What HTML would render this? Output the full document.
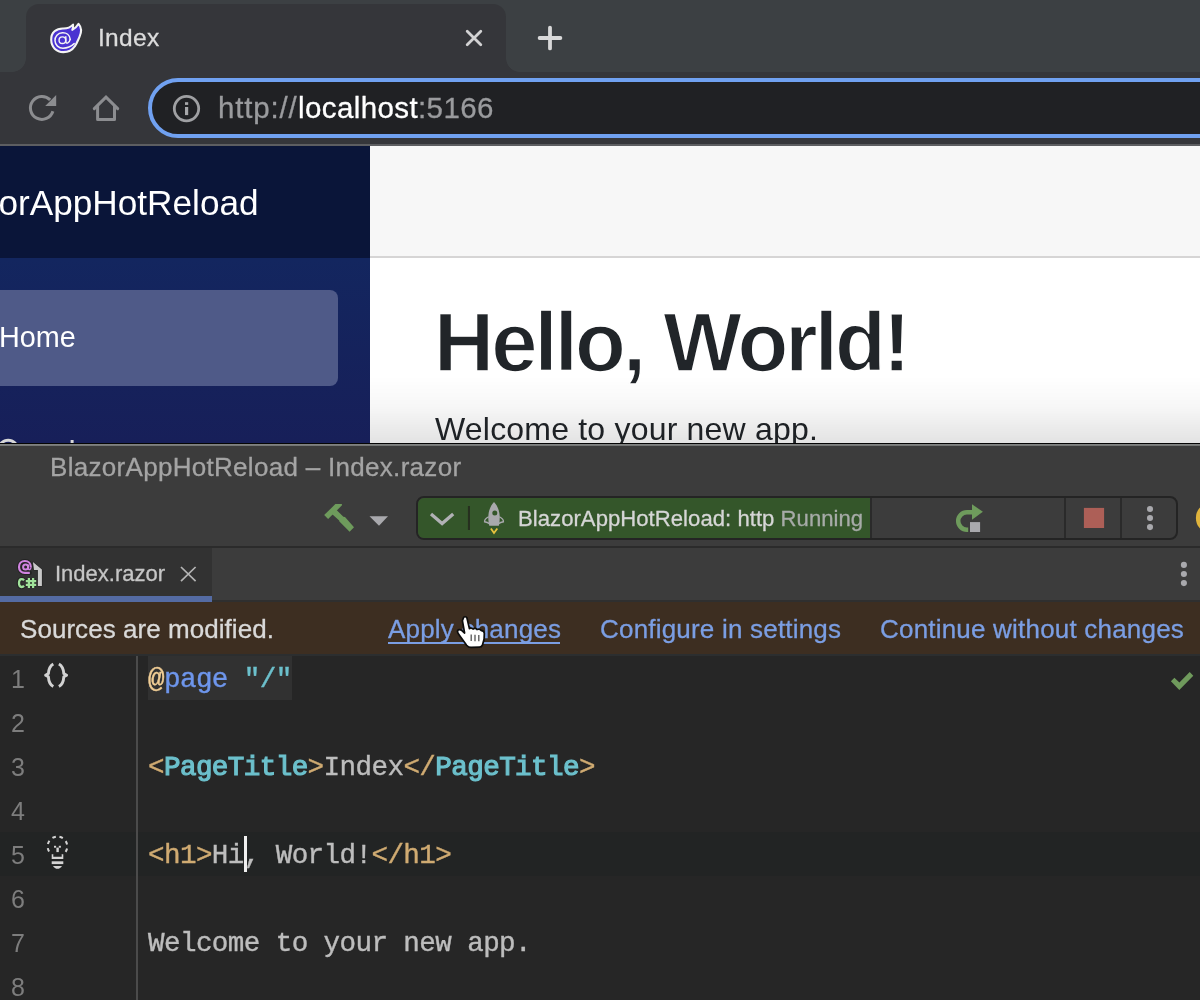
<!DOCTYPE html>
<html>
<head>
<meta charset="utf-8">
<title>Index</title>
<style>
*{box-sizing:border-box;margin:0;padding:0}
html,body{width:1200px;height:1000px;overflow:hidden;background:#3c4043}
body{font-family:"Liberation Sans",sans-serif;position:relative}
.abs{position:absolute}
.t{position:absolute;white-space:nowrap;line-height:1}
.t,.code,.ln{will-change:transform}
#idetitle,#runtxt,#ftname,#b1,#b2,#b3,#b4,#tabtitle,#u1,#u2,#u3{-webkit-text-stroke:.3px currentColor}
/* ---------- browser chrome ---------- */
#strip{left:0;top:0;width:1200px;height:72px;background:#3c4043}
#tab{left:26px;top:4px;width:480px;height:68px;background:#35363a;border-radius:13px 13px 0 0}
#flareL{left:12px;top:58px;width:14px;height:14px;background:radial-gradient(circle at 0 0,#3c4043 13.5px,#35363a 14.2px)}
#flareR{left:506px;top:58px;width:14px;height:14px;background:radial-gradient(circle at 14px 0,#3c4043 13.5px,#35363a 14.2px)}
#prevtab{left:-20px;top:4px;width:34px;height:68px;background:#3c4043}
#toolbar{left:0;top:72px;width:1200px;height:72px;background:#35363a}
#tbline{left:0;top:144px;width:1200px;height:2px;background:#5d5e61}
#url{left:148px;top:78px;width:1120px;height:60px;border:4px solid #70a1f1;border-radius:30px;background:#202124}
/* ---------- web page ---------- */
#page{left:0;top:146px;width:1200px;height:297px;background:#fff;overflow:hidden}
#side{left:0;top:0;width:370px;height:297px;background:linear-gradient(180deg,#13265f 0,#13265f 112px,#171f59 297px)}
#sidetop{left:0;top:0;width:370px;height:112px;background:#0a1539}
#maintop{left:370px;top:0;width:830px;height:112px;background:#f7f7f7;border-bottom:2px solid #d6d5d5}
#home{left:-10px;top:144px;width:348px;height:96px;border-radius:8px;background:#4f5a88}
#shadow{left:370px;top:230px;width:830px;height:67px;background:linear-gradient(180deg,rgba(0,0,0,0) 0,rgba(0,0,0,0.03) 45%,rgba(0,0,0,0.11) 100%)}
/* ---------- IDE ---------- */
#ide{left:0;top:443px;width:1200px;height:557px;background:#3c3c3c}
#ideline1{left:0;top:442.6px;width:1200px;height:1.4px;background:#050505}
#ideline2{left:0;top:444px;width:1200px;height:2px;background:linear-gradient(180deg,#858786,#6f7170)}
#tbbot{left:0;top:546px;width:1200px;height:2px;background:#2b2b2b}
#runw{left:416px;top:496px;width:762px;height:44px;border:2.5px solid #242424;border-radius:8px;background:#3c3c3c;overflow:hidden}
#rungreen{left:0;top:0;width:452px;height:40px;background:#34562a}
.vsep{position:absolute;top:0;width:2px;height:40px;background:#2a2a2a}
#filetab{left:0;top:548px;width:212px;height:48px;background:#323232}
#tabul{left:0;top:596px;width:212px;height:6px;background:#546ba3}
#tabrowline{left:212px;top:600px;width:988px;height:2px;background:#2f2f2f}
#banner{left:0;top:602px;width:1200px;height:52px;background:#3d2e21}
.lnk{color:#7b9ee3}
#editor{left:0;top:654px;width:1200px;height:346px;background:#262626}
#edtop{left:0;top:654px;width:1200px;height:2px;background:#2c2e2f}
#curline{left:0;top:832px;width:1200px;height:44px;background:#222424}
#gutline{left:136px;top:656px;width:1.5px;height:344px;background:#4b4b4b}
#hl1{left:148px;top:656px;width:144px;height:44px;background:#313131}
.ln{position:absolute;left:10.5px;font-family:"Liberation Sans",sans-serif;font-size:25px;color:#7d7d7d;line-height:1;white-space:nowrap}
.code{position:absolute;left:148px;font-family:"Liberation Mono",monospace;font-size:27.6px;letter-spacing:-0.60px;line-height:1;white-space:pre;color:#bdbdbd;-webkit-text-stroke:.4px currentColor}
.tan{color:#d0ab72}.teal{color:#6cc0cc;-webkit-text-stroke:1.15px #6cc0cc}.str{color:#6cc0cc}.blue{color:#6e96ec}.at{color:#f0cd95}
</style>
</head>
<body>
<!-- browser chrome -->
<div id="strip" class="abs"></div>
<div id="tab" class="abs"></div>
<div id="flareL" class="abs"></div>
<div id="flareR" class="abs"></div>
<div id="toolbar" class="abs"></div>
<div id="tbline" class="abs"></div>
<div id="url" class="abs"></div>
<div class="t" id="tabtitle" style="left:97.5px;top:25.7px;font-size:24.5px;letter-spacing:.3px;color:#dcdcdc">Index</div>
<div class="t" id="u1" style="left:217.5px;top:92.5px;font-size:29.5px;letter-spacing:.8px;color:#9a9b9e">http://</div>
<div class="t" id="u2" style="left:298.4px;top:92.5px;font-size:29.5px;letter-spacing:.4px;color:#fff">localhost</div>
<div class="t" id="u3" style="left:417.6px;top:92.5px;font-size:29.5px;letter-spacing:.4px;color:#9a9b9e">:5166</div>

<!-- web page -->
<div id="page" class="abs">
  <div id="side" class="abs"></div>
  <div id="sidetop" class="abs"></div>
  <div id="maintop" class="abs"></div>
  <div id="home" class="abs"></div>
  <div class="t" id="brand" style="left:-70px;top:39px;font-size:35.2px;color:#fff">BlazorAppHotReload</div>
  <div class="t" id="hometxt" style="left:-1px;top:177px;font-size:28.8px;color:#fff">Home</div>
  <div class="t" id="h1" style="left:433.5px;top:155px;font-size:83.2px;font-weight:bold;color:#212529;letter-spacing:-2.9px;-webkit-text-stroke:1.5px #fff">Hello, World!</div>
  <div class="t" id="welcome" style="left:435px;top:266.5px;font-size:32px;letter-spacing:.2px;color:#212529">Welcome to your new app.</div>
  <svg class="abs" style="left:0;top:285px" width="120" height="12" viewBox="0 0 120 12"><circle cx="8.2" cy="18.4" r="9.2" fill="none" stroke="#d7d7d7" stroke-width="3"/><rect x="70.6" y="9" width="3" height="3" fill="#d7d7d7"/></svg>
  <div id="shadow" class="abs"></div>
</div>

<!-- IDE -->
<div id="ide" class="abs"></div>
<div id="ideline1" class="abs"></div>
<div id="ideline2" class="abs"></div>
<div class="t" id="idetitle" style="left:50px;top:454px;font-size:26px;letter-spacing:.3px;color:#a4a4a4">BlazorAppHotReload – Index.razor</div>
<div id="tbbot" class="abs"></div>
<div id="runw" class="abs">
  <div id="rungreen" class="abs"></div>
  <div class="vsep" style="left:452px"></div>
  <div class="vsep" style="left:646px"></div>
  <div class="vsep" style="left:702px"></div>
</div>
<div class="t" id="runtxt" style="left:517.5px;top:508.2px;letter-spacing:.04px;font-size:22.1px;color:#d6d6d6">BlazorAppHotReload: http <span style="color:#a7aba8">Running</span></div>
<div id="filetab" class="abs"></div>
<div id="tabul" class="abs"></div>
<div id="tabrowline" class="abs"></div>
<div class="t" id="ftname" style="left:55px;top:562.6px;font-size:22px;color:#c6c6c6">Index.razor</div>
<div id="banner" class="abs"></div>
<div class="t" id="b1" style="left:20px;top:616.1px;font-size:26px;letter-spacing:.05px;color:#d9d9d9">Sources are modified.</div>
<div class="t lnk" id="b2" style="left:388px;top:616.1px;font-size:26px;letter-spacing:.2px">Apply changes</div>
<div class="abs" id="b2ul" style="left:388px;top:642.2px;width:172px;height:1.8px;background:#7b9ee3"></div>
<div class="t lnk" id="b3" style="left:600px;top:616.1px;font-size:26px;letter-spacing:.2px">Configure in settings</div>
<div class="t lnk" id="b4" style="left:880px;top:616.1px;font-size:26px;letter-spacing:.2px">Continue without changes</div>

<div id="editor" class="abs"></div>
<div id="edtop" class="abs"></div>
<div id="curline" class="abs"></div>
<div id="hl1" class="abs"></div>
<div id="gutline" class="abs"></div>
<div class="ln" style="top:666.7px">1</div>
<div class="ln" style="top:710.7px">2</div>
<div class="ln" style="top:754.7px">3</div>
<div class="ln" style="top:798.7px">4</div>
<div class="ln" style="top:842.7px">5</div>
<div class="ln" style="top:886.7px">6</div>
<div class="ln" style="top:930.7px">7</div>
<div class="ln" style="top:974.7px">8</div>
<div class="code" id="c1" style="top:665.8px"><span class="at">@</span><span class="blue">page</span> <span class="str">"/"</span></div>
<div class="code" id="c3" style="top:753.8px"><span class="tan">&lt;</span><span class="teal">PageTitle</span><span class="tan">&gt;</span>Index<span class="tan">&lt;/</span><span class="teal">PageTitle</span><span class="tan">&gt;</span></div>
<div class="code" id="c5" style="top:841.8px"><span class="tan">&lt;h1&gt;</span>Hi, World!<span class="tan">&lt;/h1&gt;</span></div>
<div class="code" id="c7" style="top:929.8px">Welcome to your new app.</div>
<div class="abs" id="caret" style="left:243.5px;top:836px;width:3.5px;height:36px;background:#f0f0f0"></div>

<!-- icon overlay (absolute page coordinates) -->
<svg id="icons" class="abs" style="left:0;top:0" width="1200" height="1000" viewBox="0 0 1200 1000">
  <!-- blazor favicon -->
  <g id="fav" transform="translate(66.2 38) scale(0.95) translate(-66.4 -37.7)">
    <path d="M50.6,39.6 C50.4,31.8 56,27.6 63.2,27.7 C67.6,27.8 70.8,26.6 73.6,23.6 C74,25.6 73.7,27.4 72.8,29.2 C75.6,27.8 77.8,25.6 79.4,22.8 C82.6,26.4 82.4,32 80.4,36.6 C78.6,40.6 77.6,43.4 75.6,46.2 C72.6,50.6 68.4,52.6 63.4,52.6 C56,52.6 50.8,47.4 50.6,39.6 Z" fill="#4a33d1" stroke="#f4f4f4" stroke-width="2.2" stroke-linejoin="round"/>
    <path d="M70.6,39.2 C70.2,34.6 66.6,32 62.4,32.2 C57.6,32.4 54.4,36 54.6,40.6 C54.8,45.2 58.4,48.4 63,48.4 C67.4,48.4 71.4,46.8 74.8,43.6" fill="none" stroke="#f4f4f4" stroke-width="1.6" stroke-linecap="round"/>
    <circle cx="62.4" cy="40" r="3.5" fill="none" stroke="#f4f4f4" stroke-width="1.5"/>
    <path d="M66,36.4 V41.6 C66,43.8 69.6,44 70.6,39.2" fill="none" stroke="#f4f4f4" stroke-width="1.5" stroke-linecap="round"/>
  </g>
  <!-- tab close x -->
  <path d="M467.2,31.2 L480.8,44.8 M480.8,31.2 L467.2,44.8" stroke="#d2d2d3" stroke-width="2.8" stroke-linecap="round" fill="none"/>
  <!-- new tab + -->
  <path d="M539.6,38 H560.4 M550,27.6 V48.4" stroke="#d8d8d9" stroke-width="3.8" stroke-linecap="round" fill="none"/>
  <!-- reload -->
  <g id="reload">
    <path d="M50.2,99.9 A11.5,11.5 0 1 0 52.9,111.3" fill="none" stroke="#8c8d90" stroke-width="3"/>
    <path d="M56.2,94.9 V105.9 H45.2 Z" fill="#8c8d90"/>
  </g>
  <!-- home -->
  <g id="homeic" fill="none" stroke="#8c8d90" stroke-width="3">
    <path d="M94.3,108.6 L106,97.2 L117.7,108.6" stroke-linecap="round" stroke-linejoin="miter"/>
    <path d="M97.6,106 V119.4 H114.5 V106" stroke-linejoin="round"/>
  </g>
  <!-- info -->
  <g id="info">
    <circle cx="186.5" cy="108.6" r="12.2" fill="none" stroke="#9fa0a3" stroke-width="2.8"/>
    <rect x="185" y="102.2" width="3.2" height="2.7" fill="#a6a7aa"/>
    <rect x="185" y="107" width="3.2" height="8.1" fill="#a6a7aa"/>
  </g>

  <!-- hammer -->
  <g id="hammer" fill="#6e9b5c">
    <path d="M324.2,515 L335.4,504.1 L342,504.1 L341.7,505.6 L328.1,519.1 Z"/>
    <path d="M331.4,513.6 L335.8,509.2 L343.4,516.8 L345,517 L354,527.2 L349.6,531.8 L339.4,521.4 L339.2,520.6 Z"/>
  </g>
  <path d="M369.5,516.2 H388 L379,525.8 Z" fill="#a9a9ad"/>
  <!-- chevron -->
  <path d="M431,514.1 L442.1,523.5 L453.2,513.9" fill="none" stroke="#b1b1b5" stroke-width="3.3" stroke-linejoin="miter"/>
  <rect x="467.9" y="506" width="2.1" height="24" fill="#26301f"/>
  <!-- rocket -->
  <g id="rocket">
    <path d="M494,502 C490.6,505.4 488.3,511 488.3,517.6 C488.3,520.8 488.7,523.6 489.3,525.8 H498.8 C499.4,523.6 499.7,520.8 499.7,517.6 C499.7,511 497.4,505.4 494,502 Z" fill="#a9a9ad"/>
    <circle cx="494.8" cy="512.9" r="2.5" fill="#34562a"/>
    <path d="M488.2,517 C485.6,518.4 484.4,520 484.6,521.8 C486.6,522.2 488.2,522.8 489.4,523.6" fill="none" stroke="#a9a9ad" stroke-width="1.4" stroke-linecap="round"/>
    <path d="M499.8,517 C502.4,518.4 503.6,520 503.4,521.8 C501.4,522.2 499.8,522.8 498.6,523.6" fill="none" stroke="#a9a9ad" stroke-width="1.4" stroke-linecap="round"/>
    <path d="M490.9,528.4 L494,533 L497.3,528.4" fill="none" stroke="#e6c23e" stroke-width="1.8"/>
  </g>
  <!-- rerun -->
  <g id="rerun">
    <path d="M972.4,512.25 H966.9 A8.7,8.7 0 0 0 966.9,529.65 H968.2" fill="none" stroke="#6e9b5c" stroke-width="4.5"/>
    <path d="M972,504.2 V519.8 L982.9,511.8 Z" fill="#6e9b5c"/>
    <rect x="970" y="522.1" width="10.1" height="9.9" fill="#a9a9ad"/>
  </g>
  <!-- stop -->
  <rect x="1083.9" y="507.9" width="20.2" height="20.1" fill="#ad5f57"/>
  <!-- kebabs -->
  <g fill="#a9a9ad">
    <circle cx="1150" cy="509" r="3.05"/><circle cx="1150" cy="518" r="3.05"/><circle cx="1150" cy="527.1" r="3.05"/>
    <circle cx="1183.9" cy="564.9" r="3.05"/><circle cx="1183.9" cy="574" r="3.05"/><circle cx="1183.9" cy="583.1" r="3.05"/>
  </g>
  <circle cx="1211.7" cy="518" r="15.8" fill="#e0b43c"/>

  <!-- file icon -->
  <g id="fileic">
    <path d="M32.9,562.1 L41.9,569.6 V585.9 H37.9 V570 H34 Z" fill="#c9c9c9" stroke="#232323" stroke-width="1.2" stroke-linejoin="round" paint-order="stroke"/>
    <path d="M30.9,567.4 C30.9,563.4 28.4,561 24.9,561 C21.2,561 19,563.8 19,567 C19,570.4 21.4,572.9 24.9,572.9 H29.8" fill="none" stroke="#232323" stroke-width="4.2" stroke-linecap="round"/>
    <circle cx="25.6" cy="567" r="2.5" fill="none" stroke="#232323" stroke-width="3.8"/>
    <path d="M30.9,567.4 C30.9,563.4 28.4,561 24.9,561 C21.2,561 19,563.8 19,567 C19,570.4 21.4,572.9 24.9,572.9 H29.8" fill="none" stroke="#d084e0" stroke-width="2.2" stroke-linecap="butt"/>
    <circle cx="25.6" cy="567" r="2.5" fill="none" stroke="#d084e0" stroke-width="2"/>
    <path d="M28.4,564.4 V568.6 C28.6,570 30.9,570 30.9,567.4" fill="none" stroke="#d084e0" stroke-width="1.4"/>
    <g stroke="#232323" stroke-width="4.4" fill="none">
      <path d="M24.1,580.2 C23.3,579.4 22.4,579.1 21.6,579.1 C19.9,579.1 19,580.7 19,583.1 C19,585.5 19.9,587 21.6,587 C22.4,587 23.3,586.7 24.1,585.9"/>
      <path d="M28.9,578 V588.1 M33.1,578 V588.1 M25.8,581.2 H36.2 M25.8,584.9 H36.2"/>
    </g>
    <g stroke="#a0e29b" stroke-width="2.3" fill="none">
      <path d="M24.1,580.2 C23.3,579.4 22.4,579.1 21.6,579.1 C19.9,579.1 19,580.7 19,583.1 C19,585.5 19.9,587 21.6,587 C22.4,587 23.3,586.7 24.1,585.9"/>
      <path d="M28.9,578 V588.1 M33.1,578 V588.1 M25.8,581.2 H36.2 M25.8,584.9 H36.2"/>
    </g>
  </g>
  <!-- file tab close -->
  <path d="M181,567 L195.6,581.2 M195.6,567 L181,581.2" stroke="#b4b4b4" stroke-width="1.7" fill="none"/>

  <!-- {} gutter icon -->
  <g fill="none" stroke="#d2d2d2" stroke-width="2.9" stroke-linejoin="round">
    <path d="M53.3,663.9 C49.6,666 48.6,670 48.4,673.6 L45.6,675.2 L48.4,676.8 C48.6,680.4 49.6,684.4 53.3,686.5"/>
    <path d="M58.9,663.9 C62.6,666 63.6,670 63.8,673.6 L66.6,675.2 L63.8,676.8 C63.6,680.4 62.6,684.4 58.9,686.5"/>
  </g>
  <!-- bulb -->
  <g id="bulb" fill="#d4d4d4">
    <circle cx="57.45" cy="846.4" r="9.8" fill="none" stroke="#d4d4d4" stroke-width="2" stroke-dasharray="3.6 4.097" stroke-dashoffset="-2.05" transform="rotate(-90 57.45 846.4)"/>
    <rect x="51.4" y="852.6" width="12.2" height="2" fill="#222424"/>
    <rect x="49" y="854.2" width="17" height="6" fill="#222424"/>
    <rect x="54" y="845.8" width="2.1" height="1.9"/><rect x="58.8" y="845.8" width="2.1" height="1.9"/>
    <rect x="56.4" y="847.6" width="2.4" height="4.5"/>
    <path d="M51.7,854.2 L53.3,854.2 V856.8 H61.7 V854.2 L63.3,854.2 V859.1 H51.7 Z"/>
    <rect x="51.7" y="861.3" width="11.6" height="2.8"/>
    <path d="M53,865.9 H62 C60.8,867.8 59.4,868.7 57.5,868.7 C55.6,868.7 54.2,867.8 53,865.9 Z"/>
  </g>
  <!-- check -->
  <path d="M1170.9,681.3 L1174.4,677.7 L1179.4,682.6 L1189.7,672 L1193.3,675.8 L1179.3,690 Z" fill="#6f9a5c"/>

  <!-- hand cursor -->
  <g id="hand">
    <path d="M463.4,618 C463.6,616.6 466.2,616.2 466.9,617.8 L469.4,628.6 C470.4,627.8 472.2,627.8 473,629 C474.2,628 476.2,628.2 477,629.6 C478.4,628.8 480.4,629.2 481.2,630.6 C482.8,630.4 484.2,631.6 484.3,633.4 C484.6,637.6 484,641.6 482.4,645.2 C481.8,646.6 480.8,647.2 479.4,647.2 L471,647.4 C469.2,647.4 467.8,646.6 466.6,645.2 L459.4,635.2 C458.2,633.6 457,632 457.6,630.6 C458.4,629.2 460.4,629.4 461.6,630.4 L464.6,633 L462.4,620.6 Z" fill="#fff" stroke="#0c0c0c" stroke-width="1.7" stroke-linejoin="round"/>
    <path d="M471.2,634.6 V641 M475,634.8 V641.2 M478.8,635 V641.2" stroke="#555" stroke-width="1.3" fill="none"/>
  </g>
</svg>
</body>
</html>
